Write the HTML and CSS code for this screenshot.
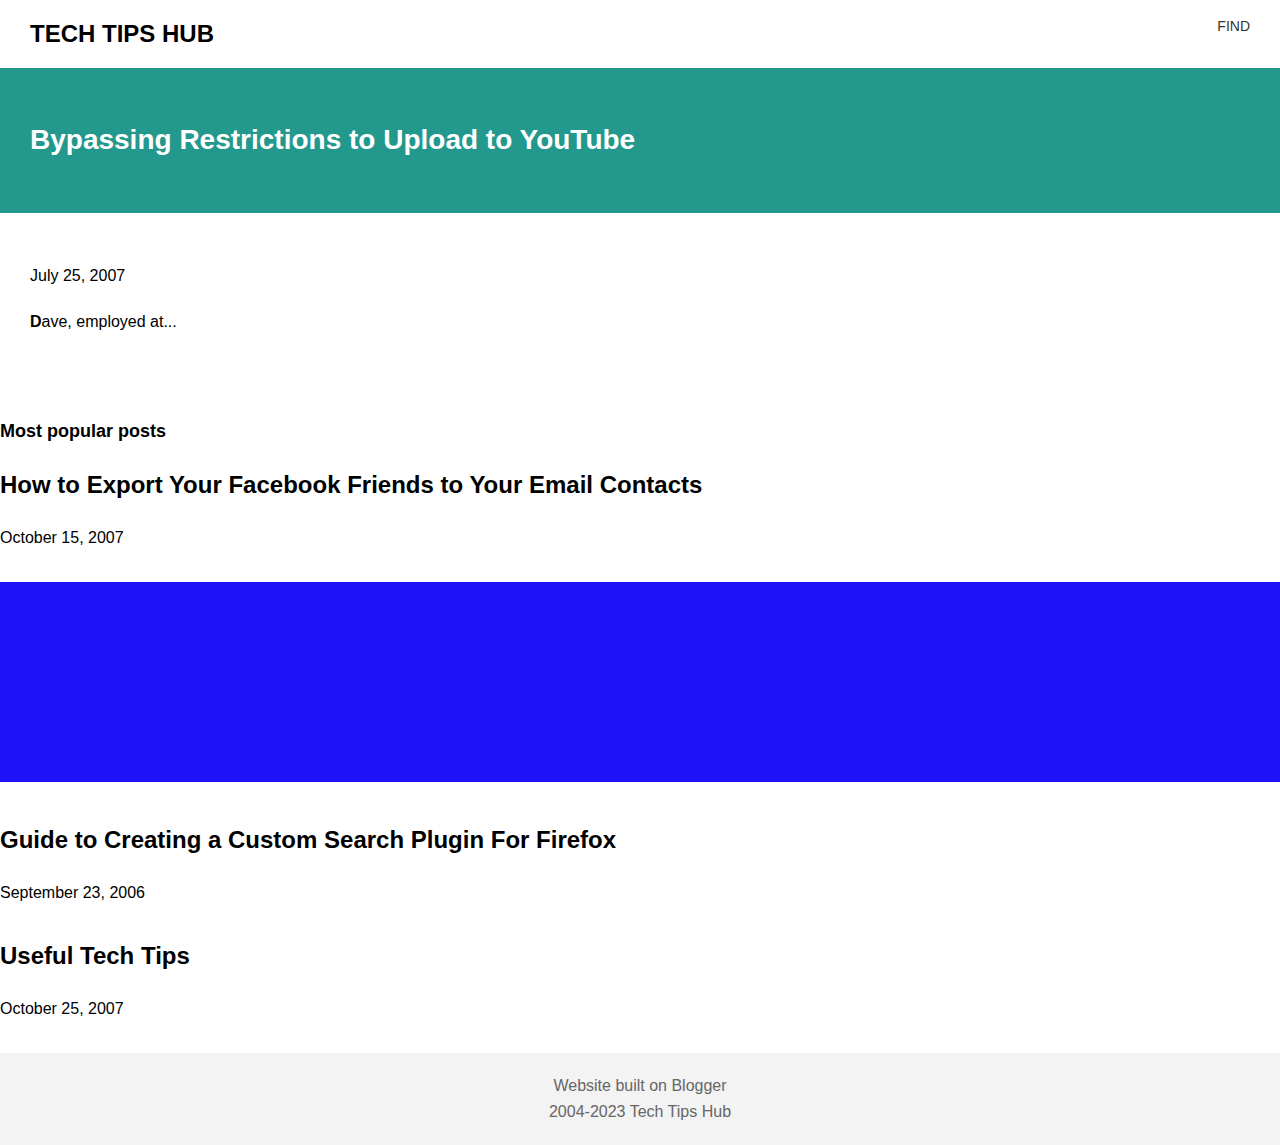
FILE: index.html
```html
<!DOCTYPE html>
<html lang="en">
<head>
<meta charset="utf-8">
<title>Tech Tips Hub</title>
<link rel="stylesheet" href="styles.css">
</head>
<body>
<header class="site-header">
  <div class="logo">TECH TIPS HUB</div>
  <div class="find">FIND</div>
</header>
<section class="hero">
  <h1 class="hero-title">Bypassing Restrictions to Upload to YouTube</h1>
</section>
<section class="article">
  <p class="date">July 25, 2007</p>
  <p class="excerpt"><b>D</b>ave, employed at...</p>
</section>
<section class="popular">
  <h3 class="popular-title">Most popular posts</h3>
  <article class="post post-first">
    <h2 class="post-title">How to Export Your Facebook Friends to Your Email Contacts</h2>
    <p class="post-date">October 15, 2007</p>
    <div class="thumb"></div>
  </article>
  <article class="post post-after-thumb">
    <h2 class="post-title">Guide to Creating a Custom Search Plugin For Firefox</h2>
    <p class="post-date">September 23, 2006</p>
  </article>
  <article class="post">
    <h2 class="post-title">Useful Tech Tips</h2>
    <p class="post-date">October 25, 2007</p>
  </article>
</section>
<footer class="site-footer">
  <div>Website built on Blogger</div>
  <div>2004-2023 Tech Tips Hub</div>
</footer>
</body>
</html>
```
FILE: styles.css
```css
* { box-sizing: border-box; }
html, body { margin: 0; padding: 0; }
body {
  font-family: "Liberation Sans", Arial, sans-serif;
  color: #000;
  background: #fff;
}
.site-header {
  height: 68px;
  padding: 0 30px;
  display: flex;
  justify-content: space-between;
  align-items: flex-start;
}
.logo {
  font-size: 24px;
  font-weight: 700;
  line-height: 68px;
}
.find {
  font-size: 14px;
  color: #333;
  margin-top: 18px;
  line-height: 16px;
}
.hero {
  height: 145px;
  background: #23988d;
  padding: 0 30px 2px;
  display: flex;
  align-items: center;
}
.hero-title {
  margin: 0;
  color: #fff;
  font-size: 28px;
  font-weight: 700;
  line-height: 34px;
}
.article {
  padding: 51px 30px 0;
}
.date, .excerpt {
  margin: 0;
  font-size: 16px;
  line-height: 24px;
}
.excerpt { margin-top: 22px; }
.popular { padding-top: 85px; }
.popular-title {
  margin: 0;
  font-size: 18px;
  line-height: 24px;
  font-weight: 700;
}
.post-title {
  margin: 0;
  font-size: 24px;
  line-height: 30px;
  font-weight: 700;
}
.post-date {
  margin: 26px 0 0;
  font-size: 16px;
  line-height: 24px;
}
.post { margin-top: 36px; }
.post-first { margin-top: 27px; }
.post-first .thumb { margin-top: 32px; }
.post-after-thumb { margin-top: 43px; }
.thumb {
  height: 200px;
  background: #1e12f6;
}
.site-footer {
  margin-top: 32px;
  background: #f3f3f3;
  color: #666;
  text-align: center;
  font-size: 16px;
  line-height: 26px;
  padding: 20px 0 20px;
}
```
